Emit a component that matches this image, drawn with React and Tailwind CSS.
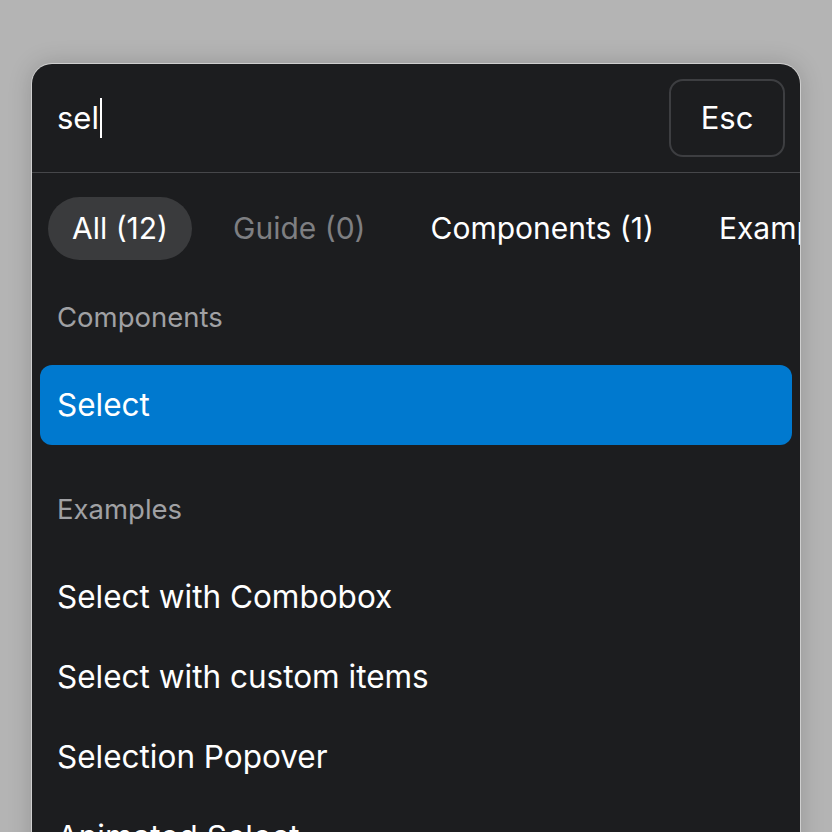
import React from 'react';

const tabs = [
    { label: 'All (12)', active: true },
    { label: 'Guide (0)', muted: true },
    { label: 'Components (1)' },
    { label: 'Examples (11)' },
];

const groups = [
    { title: 'Components', items: ['Select'], first: true },
    {
        title: 'Examples',
        items: ['Select with Combobox', 'Select with custom items', 'Selection Popover', 'Animated Select', 'Multi Select'],
    },
];

const App = () => {
    return (
        <div className="h-[832px] w-[832px] overflow-hidden bg-[#b4b4b4] pt-[64px] px-[32px]" style={{ fontFamily: 'Inter, "Noto Sans", sans-serif' }}>
            <div className="h-[900px] rounded-t-[20px] bg-[#1c1d1f] ring-1 ring-[#cfcfcf] shadow-[0_0_24px_rgba(0,0,0,0.18)] overflow-hidden">
                <div className="flex items-center justify-between h-[109px] pl-[25px] pr-[15px] border-b border-[#46474a]">
                    <div className="flex items-center text-[31px] text-white">
                        <span>sel</span>
                        <span className="w-[2px] h-[40px] bg-white ml-[1px]"></span>
                    </div>
                    <div className="w-[116px] h-[78px] rounded-[14px] border-2 border-[#3d3e41] flex items-center justify-center text-[31px] text-white">
                        Esc
                    </div>
                </div>

                <div className="flex items-center gap-[17px] pl-[16px] pt-[24px] pb-[24px] whitespace-nowrap">
                    {tabs.map((t) => (
                        <div
                            key={t.label}
                            className={`h-[63px] px-[24px] rounded-full flex items-center text-[30px] ${t.active ? 'bg-[#3a3b3d] text-white' : t.muted ? 'text-[#7e7f82]' : 'text-white'}`}
                        >
                            {t.label}
                        </div>
                    ))}
                </div>

                <div className="px-[8px]">
                    {groups.map((g) => (
                        <div key={g.title} className={g.first ? '' : 'mt-[31px]'}>
                            <div className="pl-[17px] pt-[17px] pb-[32px] h-[81px] flex items-start">
                                <span className="h-[32px] leading-[32px] text-[27.5px] text-[#a0a1a4]">{g.title}</span>
                            </div>
                            {g.items.map((item, i) => (
                                <div
                                    key={item}
                                    className={`h-[80px] pl-[17px] flex items-center text-[31.5px] text-white rounded-[12px] ${g.first && i === 0 ? 'bg-[#0079cf]' : ''}`}
                                >
                                    {item}
                                </div>
                            ))}
                        </div>
                    ))}
                </div>
            </div>
        </div>
    );
};

export default App;
